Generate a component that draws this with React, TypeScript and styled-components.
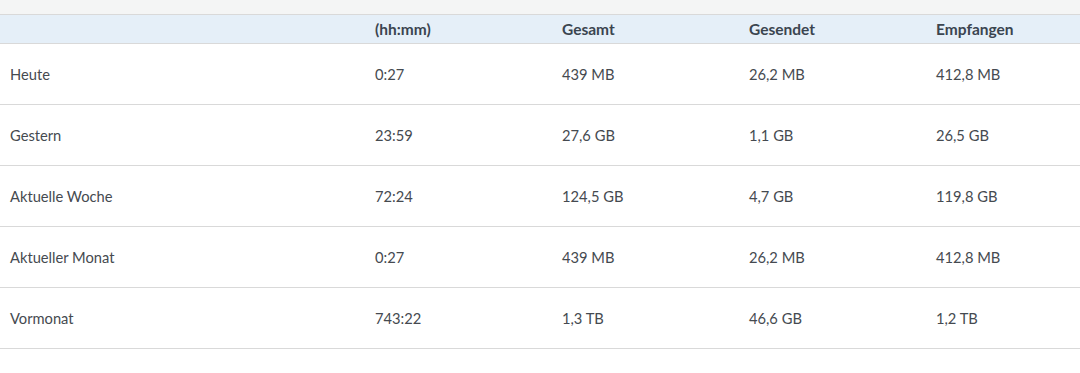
import styled, { createGlobalStyle } from "styled-components";

const GlobalStyle = createGlobalStyle`
    body {
        margin: 0;
        background: #ffffff;
        font-family: Lato, "Liberation Sans", sans-serif;
    }
`

type Row = [string, string, string, string, string];

const rows: Row[] = [
    ["Heute", "0:27", "439 MB", "26,2 MB", "412,8 MB"],
    ["Gestern", "23:59", "27,6 GB", "1,1 GB", "26,5 GB"],
    ["Aktuelle Woche", "72:24", "124,5 GB", "4,7 GB", "119,8 GB"],
    ["Aktueller Monat", "0:27", "439 MB", "26,2 MB", "412,8 MB"],
    ["Vormonat", "743:22", "1,3 TB", "46,6 GB", "1,2 TB"],
];

const headers = ["", "(hh:mm)", "Gesamt", "Gesendet", "Empfangen"];

export default function App() {
    return (
        <>
            <GlobalStyle/>
            <Page>
                <TopBand/>
                <Table>
                    <HeadRow>
                        {headers.map((h, i) => <HeadCell key={i}>{h}</HeadCell>)}
                    </HeadRow>
                    {rows.map((r) => (
                        <BodyRow key={r[0]}>
                            {r.map((c, i) => <Cell key={i}>{c}</Cell>)}
                        </BodyRow>
                    ))}
                </Table>
            </Page>
        </>
    );
}

const Page = styled.div`
    width: 1080px;
    height: 373px;
    overflow: hidden;
    background: #ffffff;
`
const TopBand = styled.div`
    height: 14px;
    background: #f4f5f5;
`
const Table = styled.div`
    display: flex;
    flex-direction: column;
`
const Grid = styled.div`
    display: grid;
    grid-template-columns: 365px 187px 187px 187px 1fr;
    align-items: center;
    border-top: 1px solid #d9d9d9;
`
const HeadRow = styled(Grid)`
    height: 28px;
    background: #e5eff8;
`
const BodyRow = styled(Grid)`
    height: 60px;
    &:last-child {
        border-bottom: 1px solid #d9d9d9;
    }
`
const HeadCell = styled.div`
    padding-left: 10px;
    font-size: 15.5px;
    font-weight: 700;
    color: #3b4550;
`
const Cell = styled.div`
    padding-left: 10px;
    font-size: 14.7px;
    color: #454a50;
`
